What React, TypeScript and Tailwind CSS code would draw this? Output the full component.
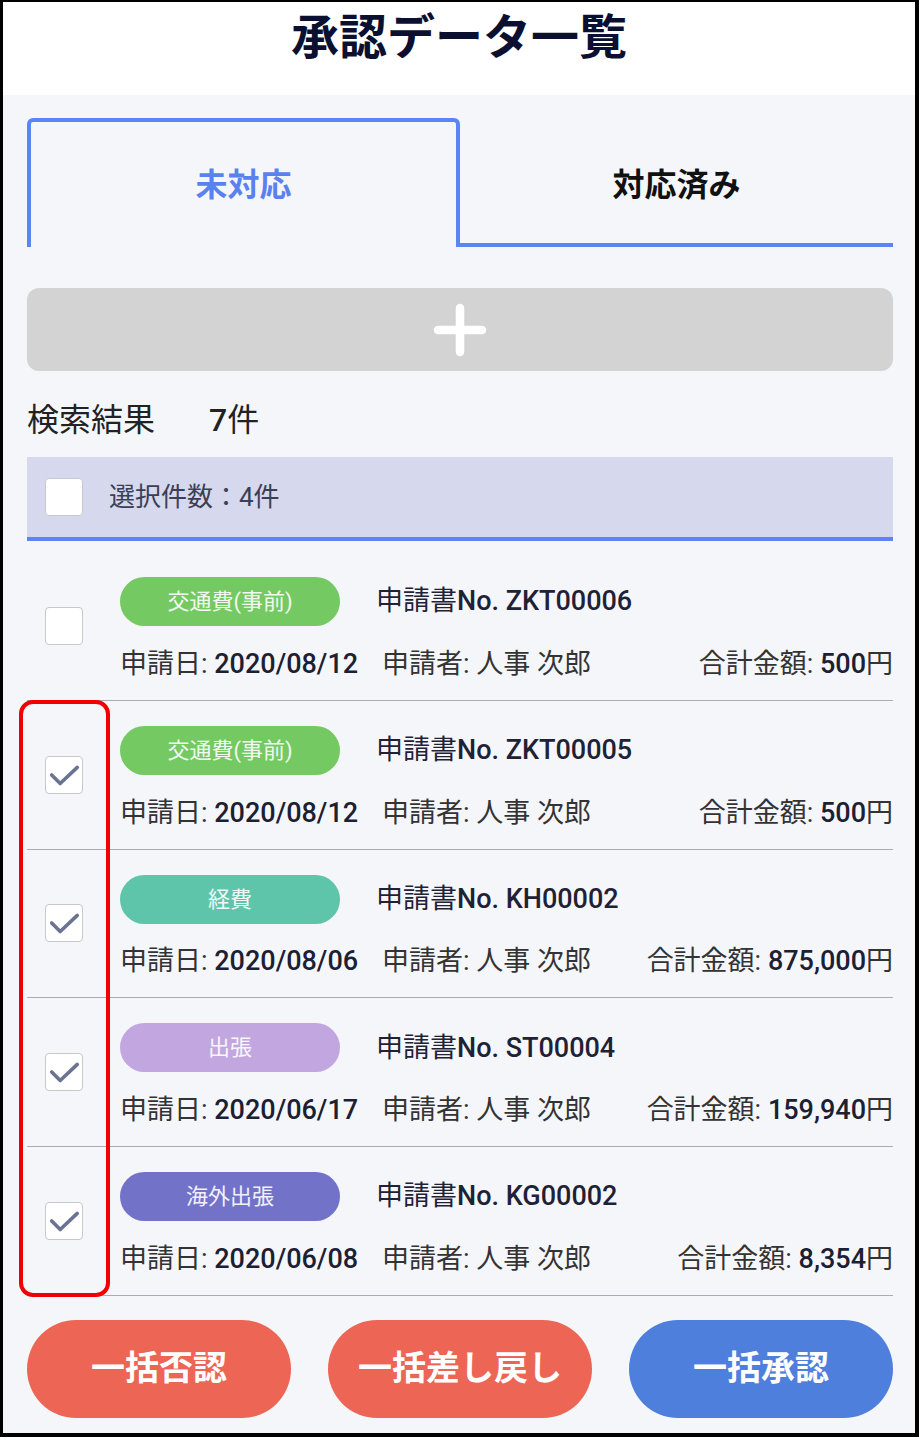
import React from 'react';

const font = "font-['Roboto','Noto_Sans_CJK_JP',sans-serif]";

type Row = {
  tag: string;
  tagColor: string;
  no: string;
  date: string;
  amount: string;
  checked: boolean;
};

const rows: Row[] = [
  { tag: '交通費(事前)', tagColor: 'bg-[#75c963]', no: 'ZKT00006', date: '2020/08/12', amount: '500', checked: false },
  { tag: '交通費(事前)', tagColor: 'bg-[#75c963]', no: 'ZKT00005', date: '2020/08/12', amount: '500', checked: true },
  { tag: '経費', tagColor: 'bg-[#5ec5ab]', no: 'KH00002', date: '2020/08/06', amount: '875,000', checked: true },
  { tag: '出張', tagColor: 'bg-[#c2a6e0]', no: 'ST00004', date: '2020/06/17', amount: '159,940', checked: true },
  { tag: '海外出張', tagColor: 'bg-[#7372c9]', no: 'KG00002', date: '2020/06/08', amount: '8,354', checked: true },
];

const CheckBox = ({ checked }: { checked: boolean }) => (
  <div className="w-[38px] h-[38px] shrink-0 bg-white border-[1.5px] border-[#c8c8cc] rounded-[4px] flex items-center justify-center">
    {checked && (
      <svg width="38" height="38" viewBox="0 0 38 38">
        <polyline points="6,19 15,28 33,11" fill="none" stroke="#6b7392" strokeWidth="3.8" strokeLinecap="round" strokeLinejoin="round" />
      </svg>
    )}
  </div>
);

const ListRow = ({ row }: { row: Row }) => (
  <div className="h-[148.75px] flex items-center border-b-[1.5px] border-[#a9abb8]">
    <div className="ml-[18px]">
      <CheckBox checked={row.checked} />
    </div>
    <div className="ml-[37px] flex-1 flex flex-col self-stretch pt-[25px]">
      <div className="flex items-center h-[49px]">
        <div className={`w-[220px] h-[49px] rounded-full ${row.tagColor} flex items-center justify-center text-[22px] text-white/90`}>
          {row.tag}
        </div>
        <div className="ml-[36px] text-[27px] text-[#1e2234]">
          申請書<span className="font-medium">No. {row.no}</span>
        </div>
      </div>
      <div className="mt-[19px] flex items-center h-[38px] text-[27px] text-[#333]">
        <div className="w-[262px] whitespace-nowrap">
          申請日: <span className="font-medium text-[#1b2032]">{row.date}</span>
        </div>
        <div className="flex-1 whitespace-nowrap">申請者: 人事 次郎</div>
        <div className="whitespace-nowrap">
          合計金額: <span className="font-medium text-[#1b2032]">{row.amount}</span>円
        </div>
      </div>
    </div>
  </div>
);

export default function App() {
  return (
    <div className={`w-[919px] h-[1437px] border-l-[3px] border-t-2 border-r-4 border-b-4 border-black bg-[#f5f6fa] flex flex-col ${font}`}>
      {/* header */}
      <div className="h-[93px] shrink-0 bg-white flex justify-center pt-[12px]">
        <h1 className="text-[48px] leading-[48px] font-bold text-[#0b1030]">承認データ一覧</h1>
      </div>

      {/* tabs */}
      <div className="ml-[24px] w-[866px] mt-[23px] h-[129px] shrink-0 flex">
        <div className="w-[433px] border-4 border-b-0 border-[#5b85f5] rounded-t-[6px] flex items-center justify-center text-[32px] font-bold text-[#5a82ef]">
          未対応
        </div>
        <div className="flex-1 border-t-4 border-t-transparent border-b-4 border-b-[#5b85f5] flex items-center justify-center pt-[4px] text-[32px] font-bold text-[#111]">
          対応済み
        </div>
      </div>

      {/* add button */}
      <div className="ml-[24px] w-[866px] mt-[41px] h-[83px] shrink-0 rounded-[12px] bg-[#d3d3d3] flex items-center justify-center">
        <svg width="60" height="60" viewBox="0 0 60 60">
          <line x1="30" y1="8" x2="30" y2="52" stroke="white" strokeWidth="8.5" strokeLinecap="round" />
          <line x1="8" y1="30" x2="52" y2="30" stroke="white" strokeWidth="8.5" strokeLinecap="round" />
        </svg>
      </div>

      {/* result count */}
      <div className="ml-[24px] h-[86px] shrink-0 flex items-center pt-[12px] text-[32px] text-[#222]">
        <span>検索結果</span>
        <span className="ml-[54px]">
          <span className="font-medium">7</span>件
        </span>
      </div>

      {/* selection bar */}
      <div className="ml-[24px] w-[866px] h-[84px] shrink-0 bg-[#d6d8ed] border-b-4 border-[#5b85f5] flex items-center">
        <div className="ml-[18px]">
          <CheckBox checked={false} />
        </div>
        <div className="ml-[26px] text-[26px] text-[#3a3f55]">選択件数：4件</div>
      </div>

      {/* list */}
      <div className="relative ml-[24px] w-[866px] pt-[11px] shrink-0">
        {rows.map((row, i) => (
          <ListRow key={i} row={row} />
        ))}
        <div className="absolute left-[-8px] top-[159px] w-[91px] h-[597px] border-4 border-[#f00000] rounded-[14px]" />
      </div>

      {/* bulk actions */}
      <div className="ml-[24px] w-[866px] mt-[24px] flex gap-[37px]">
        <button className="w-[264px] h-[98px] rounded-full bg-[#ec6555] text-white text-[34px] font-bold">一括否認</button>
        <button className="w-[264px] h-[98px] rounded-full bg-[#ec6555] text-white text-[34px] font-bold">一括差し戻し</button>
        <button className="w-[264px] h-[98px] rounded-full bg-[#4f7fdd] text-white text-[34px] font-bold">一括承認</button>
      </div>
    </div>
  );
}
